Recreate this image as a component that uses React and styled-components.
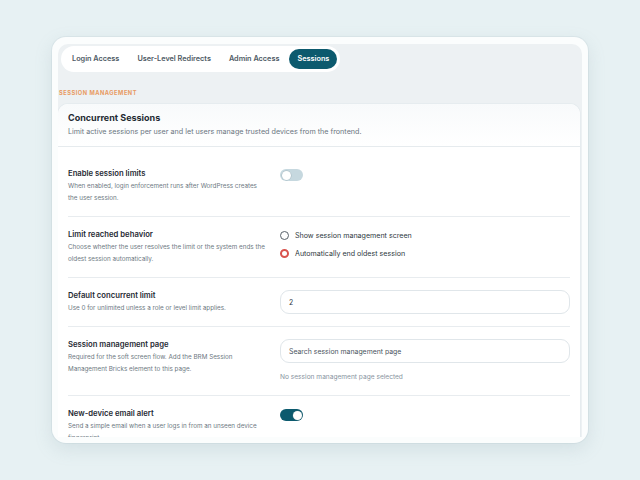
import React from 'react';
import styled, { createGlobalStyle } from 'styled-components';

const Global = createGlobalStyle`
  body {
    margin: 0;
    background: #e7f1f3;
    font-family: Inter, "Noto Sans", sans-serif;
    -webkit-font-smoothing: antialiased;
  }
`;

const Page = styled.div`
  padding: 37px 52px;
`;

const Frame = styled.div`
  height: 406px;
  box-sizing: border-box;
  padding: 7px 6px 6px;
  background: #fbfdfd;
  border-radius: 14px;
  box-shadow: 0 6px 18px rgba(120, 150, 160, 0.18), 0 0 0 1px rgba(200, 215, 220, 0.35);
`;

const Viewport = styled.div`
  height: 100%;
  overflow: hidden;
  background: #edf1f3;
  border-radius: 10px 10px 0 0;
`;

const TabBar = styled.div`
  display: inline-flex;
  align-items: center;
  gap: 2px;
  margin: 2px 0 0 3px;
  padding: 3px;
  background: #fff;
  border-radius: 14px;
`;

const Tab = styled.div`
  padding: 0 8px;
  height: 20px;
  line-height: 20px;
  border-radius: 10px;
  font-size: 7.3px;
  font-weight: 600;
  color: ${p => (p.$active ? '#fff' : '#4e5a64')};
  background: ${p => (p.$active ? '#0c5a6e' : 'transparent')};
`;

const SectionLabel = styled.div`
  margin: 17px 0 0 1px;
  font-size: 5.7px;
  line-height: 8px;
  font-weight: 700;
  letter-spacing: 0.09em;
  color: #e89a62;
`;

const Card = styled.div`
  margin: 7px 2px 0 0;
  background: #fff;
  border-radius: 10px 10px 0 0;
  box-shadow: 0 0 0 1px #e6ecef;
`;

const CardHeader = styled.div`
  padding: 7px 10px 8px;
  border-bottom: 1px solid #e6ebee;
  background: linear-gradient(#f8fafb, #fff);
  border-radius: 10px 10px 0 0;
`;

const CardTitle = styled.div`
  font-size: 9px;
  line-height: 14px;
  font-weight: 700;
  color: #1e2a32;
`;

const CardDesc = styled.div`
  margin-top: 1px;
  font-size: 7.2px;
  line-height: 12px;
  color: #6a7580;
`;

const Body = styled.div`
  padding: 9px 10px 0;
`;

const Row = styled.div`
  display: grid;
  grid-template-columns: 198px 1fr;
  column-gap: 14px;
  padding: 12px 0;
  border-top: ${p => (p.$first ? 'none' : '1px solid #e8ecef')};
`;

const Label = styled.div``;

const RowTitle = styled.div`
  font-size: 7.7px;
  line-height: 12px;
  font-weight: 600;
  color: #1f2a33;
`;

const RowDesc = styled.div`
  font-size: 6.3px;
  line-height: 12px;
  color: #6d7882;
`;

const Control = styled.div`
  display: flex;
  flex-direction: column;
  align-items: flex-start;
`;

const Toggle = styled.div`
  position: relative;
  width: 23px;
  height: 12px;
  margin-top: 1px;
  border-radius: 6px;
  background: ${p => (p.$on ? '#0c5a6e' : '#c6d8df')};

  &::after {
    content: '';
    position: absolute;
    top: 1.5px;
    left: ${p => (p.$on ? '12.5px' : '1.5px')};
    width: 9px;
    height: 9px;
    border-radius: 50%;
    background: #fff;
    box-shadow: 0 0 0 0.5px rgba(120, 140, 150, 0.4);
  }
`;

const RadioList = styled.div`
  display: flex;
  flex-direction: column;
  gap: 6px;
`;

const RadioItem = styled.div`
  display: flex;
  align-items: center;
  gap: 6px;
  height: 12px;
  font-size: 7.1px;
  color: #2d3840;
`;

const RadioDot = styled.span`
  width: 9px;
  height: 9px;
  box-sizing: border-box;
  border-radius: 50%;
  border: ${p => (p.$checked ? '2.6px solid #d9544e' : '1.2px solid #59626a')};
  background: #fff;
`;

const Input = styled.div`
  width: 100%;
  height: 24px;
  box-sizing: border-box;
  padding: 0 8px;
  display: flex;
  align-items: center;
  border: 1px solid #e0e6ea;
  border-radius: 9px;
  font-size: 6.9px;
  color: ${p => (p.$placeholder ? '#4b555e' : '#2a343c')};
`;

const Helper = styled.div`
  margin-top: 8px;
  font-size: 6.6px;
  line-height: 12px;
  color: #8893a0;
`;

export default function App() {
  return (
    <>
      <Global />
      <Page>
        <Frame>
          <Viewport>
            <TabBar>
              <Tab>Login Access</Tab>
              <Tab>User-Level Redirects</Tab>
              <Tab>Admin Access</Tab>
              <Tab $active>Sessions</Tab>
            </TabBar>
            <SectionLabel>SESSION MANAGEMENT</SectionLabel>
            <Card>
              <CardHeader>
                <CardTitle>Concurrent Sessions</CardTitle>
                <CardDesc>
                  Limit active sessions per user and let users manage trusted devices from the frontend.
                </CardDesc>
              </CardHeader>
              <Body>
                <Row $first>
                  <Label>
                    <RowTitle>Enable session limits</RowTitle>
                    <RowDesc>
                      When enabled, login enforcement runs after WordPress creates the user session.
                    </RowDesc>
                  </Label>
                  <Control>
                    <Toggle />
                  </Control>
                </Row>
                <Row>
                  <Label>
                    <RowTitle>Limit reached behavior</RowTitle>
                    <RowDesc>
                      Choose whether the user resolves the limit or the system ends the oldest session automatically.
                    </RowDesc>
                  </Label>
                  <Control>
                    <RadioList>
                      <RadioItem>
                        <RadioDot />
                        Show session management screen
                      </RadioItem>
                      <RadioItem>
                        <RadioDot $checked />
                        Automatically end oldest session
                      </RadioItem>
                    </RadioList>
                  </Control>
                </Row>
                <Row>
                  <Label>
                    <RowTitle>Default concurrent limit</RowTitle>
                    <RowDesc>Use 0 for unlimited unless a role or level limit applies.</RowDesc>
                  </Label>
                  <Control>
                    <Input>2</Input>
                  </Control>
                </Row>
                <Row>
                  <Label>
                    <RowTitle>Session management page</RowTitle>
                    <RowDesc>
                      Required for the soft screen flow. Add the BRM Session Management Bricks element to this page.
                    </RowDesc>
                  </Label>
                  <Control>
                    <Input $placeholder>Search session management page</Input>
                    <Helper>No session management page selected</Helper>
                  </Control>
                </Row>
                <Row>
                  <Label>
                    <RowTitle>New-device email alert</RowTitle>
                    <RowDesc>
                      Send a simple email when a user logs in from an unseen device fingerprint.
                    </RowDesc>
                  </Label>
                  <Control>
                    <Toggle $on />
                  </Control>
                </Row>
              </Body>
            </Card>
          </Viewport>
        </Frame>
      </Page>
    </>
  );
}
